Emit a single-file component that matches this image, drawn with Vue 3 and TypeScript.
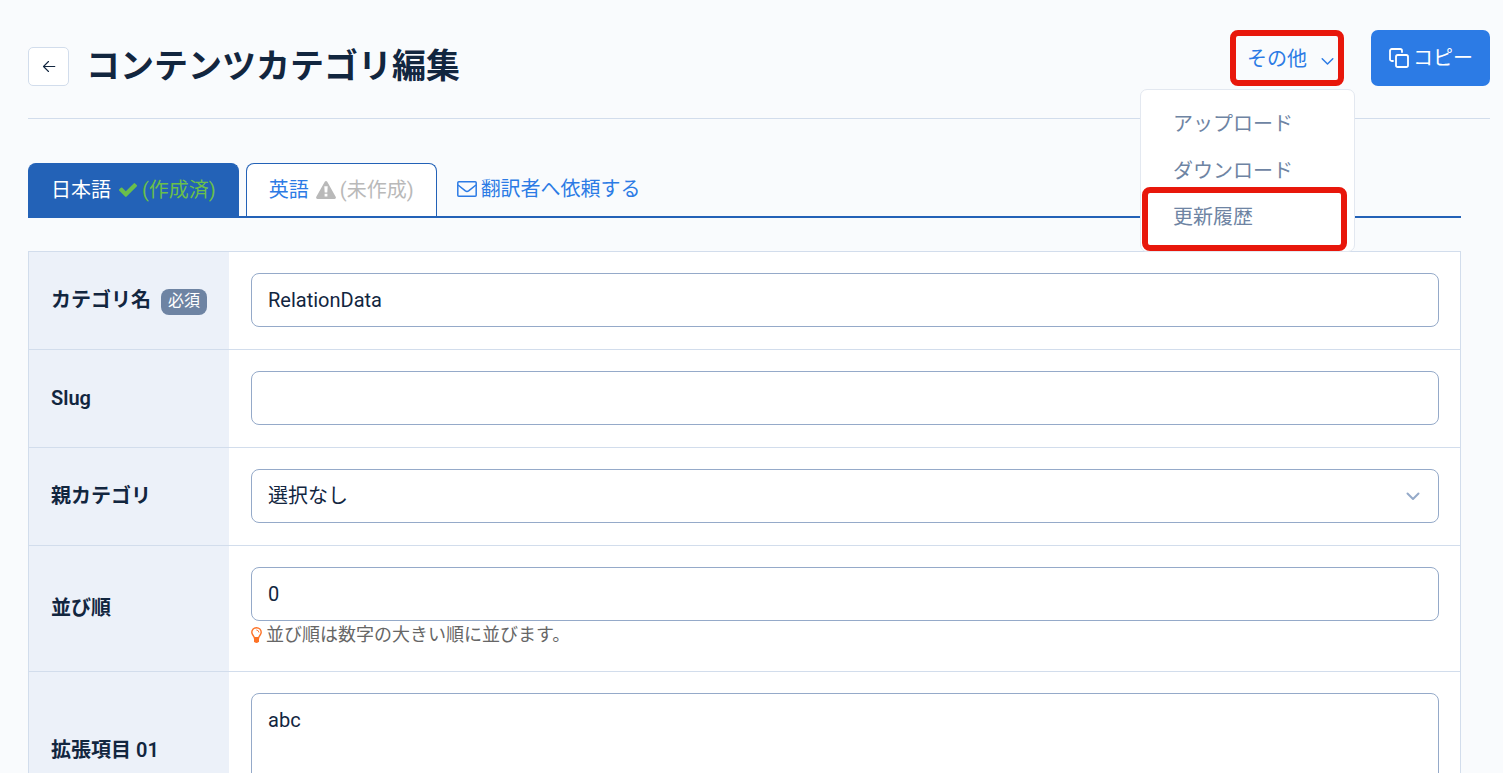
<script setup lang="ts">
import { ref } from 'vue'

const menuItems: string[] = ['アップロード', 'ダウンロード', '更新履歴']
const name = ref('RelationData')
const slug = ref('')
const parent = ref('')
const order = ref('0')
const extra = ref('abc')
</script>

<template>
  <main class="page">
    <header class="header">
      <button class="back" type="button" aria-label="戻る">
        <svg width="14" height="14" viewBox="0 0 14 14" fill="none" stroke="currentColor" stroke-width="1.1" stroke-linecap="round" stroke-linejoin="round">
          <path d="M12.8 6.500H1.500M6.500 1.500l-5 5 5 5" />
        </svg>
      </button>
      <h1 class="title">コンテンツカテゴリ編集</h1>
      <div class="actions">
        <div class="dropdown">
          <button class="other" type="button" aria-haspopup="true" aria-expanded="true">
            <span>その他</span>
            <svg class="caret" width="13" height="9" viewBox="0 0 13 9" fill="none" stroke="currentColor" stroke-width="1.5" stroke-linecap="round" stroke-linejoin="round">
              <path d="M1.2 1.8 6.5 7l5.3-5.2" />
            </svg>
          </button>
          <ul class="menu">
            <li v-for="(item, i) in menuItems" :key="item" :class="{ marked: i === 2 }">
              <a href="#">{{ item }}</a>
            </li>
          </ul>
        </div>
        <button class="copy" type="button">
          <svg width="20" height="20" viewBox="0 0 20 20" fill="none" stroke="currentColor" stroke-width="1.8" stroke-linecap="round" stroke-linejoin="round">
            <rect x="7" y="7" width="12" height="12" rx="1.8" />
            <path d="M4 13H2.8A1.8 1.8 0 0 1 1 11.200V2.800A1.800 1.800 0 0 1 2.800 1h8.400A1.800 1.800 0 0 1 13 2.800V4" />
          </svg>
          <span>コピー</span>
        </button>
      </div>
    </header>

    <nav class="tabs">
      <a class="tab active" href="#">
        <span>日本語</span>
        <svg class="check" width="18" height="14" viewBox="0 0 18 14" fill="currentColor">
          <path d="M17.700 3.400 7.600 13.500a1 1 0 0 1-1.500 0L.300 7.700a1 1 0 0 1 0-1.400L1.900 4.800a1 1 0 0 1 1.400 0l3.500 3.500L14.700.400a1 1 0 0 1 1.400 0l1.600 1.500a1 1 0 0 1 0 1.500z" />
        </svg>
        <span class="done">(作成済)</span>
      </a>
      <a class="tab" href="#">
        <span>英語</span>
        <svg class="warn" width="20" height="18" viewBox="0 0 20 18" fill="currentColor">
          <path fill-rule="evenodd" d="M11.250.750 19.800 16.100Q20.300 17.900 18.600 18H1.400Q-.300 17.900.200 16.100L8.750.750Q10-.700 11.250.750zM8.300 5.200l.400 6.200h2.600l.400-6.200zM8.600 12.800v2.600h2.800v-2.600z" />
        </svg>
        <span class="todo">(未作成)</span>
      </a>
      <a class="request" href="#">
        <svg width="20" height="16" viewBox="0 0 20 16" fill="none" stroke="currentColor" stroke-width="1.500" stroke-linejoin="round">
          <rect x=".8" y=".8" width="18.400" height="14.400" rx="1" />
          <path d="M1 4 8.400 9.900q1.600 1.100 3.200 0L19 4" />
        </svg>
        <span>翻訳者へ依頼する</span>
      </a>
    </nav>

    <table class="form">
      <tbody>
        <tr>
          <th scope="row">
            <div class="label-row">
              <label for="name">カテゴリ名</label>
              <span class="badge">必須</span>
            </div>
          </th>
          <td><input id="name" v-model="name" class="field" type="text" /></td>
        </tr>
        <tr>
          <th scope="row"><label for="slug">Slug</label></th>
          <td><input id="slug" v-model="slug" class="field" type="text" /></td>
        </tr>
        <tr>
          <th scope="row"><label for="parent">親カテゴリ</label></th>
          <td>
            <div class="select-wrap">
              <select id="parent" v-model="parent" class="field">
                <option value="">選択なし</option>
              </select>
              <svg class="select-caret" width="14" height="9" viewBox="0 0 14 9" fill="none" stroke="currentColor" stroke-width="2" stroke-linecap="round" stroke-linejoin="round">
                <path d="M1.500 1.500 7 7l5.500-5.500" />
              </svg>
            </div>
          </td>
        </tr>
        <tr>
          <th scope="row"><label for="order">並び順</label></th>
          <td>
            <input id="order" v-model="order" class="field" type="text" aria-describedby="order-hint" />
            <p id="order-hint" class="hint">
              <svg width="11" height="16" viewBox="0 0 11 16">
                <path d="M3.300 10.800C3.100 8.700.800 8 .800 5.300a4.700 4.500 0 0 1 9.400 0c0 2.700-2.300 3.400-2.500 5.500z" fill="none" stroke="#fd7226" stroke-width="1.400" />
                <path d="M5.700 3q2 .200 2.200 2.100" fill="none" stroke="#fd7226" stroke-width=".9" stroke-linecap="round" />
                <path d="M3 10.500h5v3.800Q7.400 16 5.500 16T3 14.300z" fill="#fd7226" />
              </svg>
              <span>並び順は数字の大きい順に並びます。</span>
            </p>
          </td>
        </tr>
        <tr>
          <th scope="row"><label for="extra">拡張項目 01</label></th>
          <td><textarea id="extra" v-model="extra" class="field area"></textarea></td>
        </tr>
      </tbody>
    </table>
  </main>
</template>

<style>
html {
  background: #f9fbfd;
  scrollbar-width: none;
}
</style>

<style scoped>
.page {
  box-sizing: border-box;
  padding: 0 13px 24px 28px;
  color: #12263f;
  font-family: Roboto, "Noto Sans CJK JP", sans-serif;
  font-size: 20px;
  line-height: 30px;
}
.page * {
  box-sizing: border-box;
}
button,
input,
select,
textarea {
  font: inherit;
  color: inherit;
}
a {
  text-decoration: none;
}
svg {
  display: block;
  flex: none;
}
.header {
  display: flex;
  align-items: flex-start;
  padding: 30px 0 27px;
  border-bottom: 1px solid #d2ddec;
}
.back {
  display: flex;
  align-items: center;
  justify-content: center;
  width: 41px;
  height: 39px;
  margin-top: 17px;
  padding: 0;
  background: #fff;
  border: 1px solid #d2ddec;
  border-radius: 5px;
}
.title {
  margin: 11px 0 0 17px;
  font-size: 34px;
  line-height: 50px;
  font-weight: 700;
}
.actions {
  display: flex;
  gap: 27px;
  margin-left: auto;
}
.dropdown {
  position: relative;
}
.other {
  display: flex;
  align-items: center;
  gap: 14px;
  width: 114px;
  height: 56px;
  padding: 2px 0 0 11px;
  color: #2c7be5;
  background: #f9fbfd;
  border: 6px solid #e8170b;
  border-radius: 8px;
}
.caret {
  margin-top: 4px;
}
.menu {
  position: absolute;
  z-index: 2;
  top: 59px;
  right: -11px;
  width: 215px;
  margin: 0;
  padding: 11px 0 0;
  list-style: none;
  background: #fff;
  border: 1px solid #e3e8f0;
  border-radius: 7px;
}
.menu a {
  display: block;
  padding: 8px 32px 9px;
  color: #6e84a3;
}
.menu .marked {
  width: 205px;
  margin: -8px 0 0 1px;
  border: 6px solid #e8170b;
  border-radius: 8px;
}
.menu .marked a {
  padding: 9px 25px 13px;
}
.copy {
  display: flex;
  align-items: center;
  gap: 4px;
  height: 56px;
  padding: 0 17px 0 18px;
  color: #fff;
  background: #2c7be5;
  border: 0;
  border-radius: 7px;
}
.tabs {
  display: flex;
  gap: 7px;
  margin: 44px 29px 33px 0;
  border-bottom: 2px solid #2362b7;
}
.tab {
  display: flex;
  align-items: center;
  height: 53px;
  padding: 0 22px;
  color: #2c7be5;
  background: #fff;
  border: 1px solid #2362b7;
  border-bottom: 0;
  border-radius: 8px 8px 0 0;
}
.active {
  color: #fff;
  background: #2362b7;
}
.check {
  margin: 0 5px 0 8px;
  color: #6abf4b;
}
.done {
  color: #6abf4b;
}
.warn {
  margin: 0 4px 0 7px;
  color: #b9b9b9;
}
.todo {
  color: #b9b9b9;
}
.request {
  display: flex;
  align-items: center;
  gap: 4px;
  height: 52px;
  margin-left: 13px;
  color: #2c7be5;
}
.form {
  width: calc(100% - 29px);
  border: 1px solid #d2ddec;
  border-bottom: 0;
  border-spacing: 0;
  background: #fff;
}
.form th,
.form td {
  border-bottom: 1px solid #d2ddec;
  text-align: left;
  vertical-align: middle;
}
.form th {
  width: 200px;
  padding: 0 22px 2px;
  font-weight: 600;
  background: #ecf1f9;
}
.form td {
  padding: 21px 21px 22px 22px;
}
.label-row {
  display: flex;
  align-items: center;
  gap: 10px;
  white-space: nowrap;
}
.badge {
  height: 26px;
  margin-top: 4px;
  padding: 0 7px;
  font-size: 16px;
  line-height: 24px;
  font-weight: 400;
  color: #fff;
  background: #6e84a3;
  border-radius: 8px;
}
.field {
  display: block;
  width: 100%;
  height: 54px;
  margin: 0;
  padding: 0 16px;
  background: #fff;
  border: 1px solid #95aac9;
  border-radius: 8px;
  outline: 0;
}
.select-wrap {
  position: relative;
}
.select-wrap select {
  appearance: none;
}
.select-caret {
  position: absolute;
  top: 23px;
  right: 19px;
  color: #95aac9;
  pointer-events: none;
}
.hint {
  display: flex;
  align-items: center;
  gap: 4px;
  height: 28px;
  margin: 0;
  font-size: 18px;
  line-height: 28px;
  color: #666;
}
.area {
  height: 114px;
  padding: 11px 16px;
  resize: none;
}
</style>
